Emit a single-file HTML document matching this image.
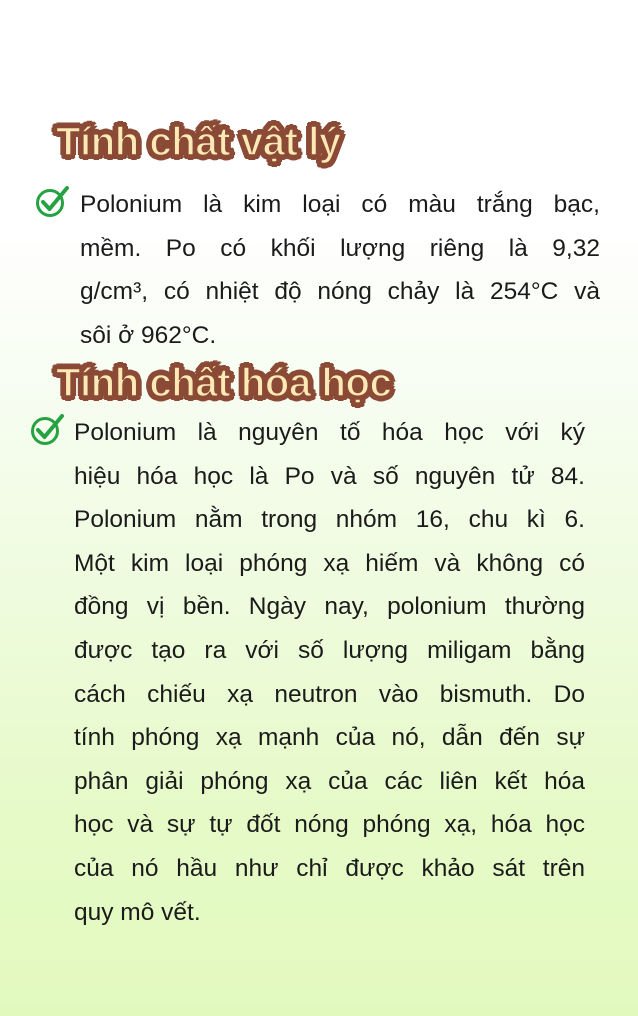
<!DOCTYPE html>
<html><head><meta charset="utf-8"><style>
html,body{margin:0;padding:0}
body{width:638px;height:1016px;overflow:hidden;position:relative;
background:linear-gradient(180deg,#ffffff 0%,#ffffff 22%,#f6fdf0 40%,#eefbdc 60%,#e6fac8 80%,#e2f9be 100%);
font-family:"Liberation Sans",sans-serif;color:#1b1b1b}
.title{position:absolute;font-weight:bold;font-size:40px;letter-spacing:-0.4px;color:#fde9b6;white-space:nowrap;
-webkit-text-stroke:1.5px #8a4a36;
text-shadow:
 3px 0 #8a4a36,-3px 0 #8a4a36,0 3px #8a4a36,0 -3px #8a4a36,
 2px 2px #8a4a36,-2px 2px #8a4a36,2px -2px #8a4a36,-2px -2px #8a4a36,
 5px 0 #8a4a36,-5px 0 #8a4a36,0 5px #8a4a36,0 -5px #8a4a36,
 4px 3px #8a4a36,-4px 3px #8a4a36,4px -3px #8a4a36,-4px -3px #8a4a36,
 3px 4px #8a4a36,-3px 4px #8a4a36,3px -4px #8a4a36,-3px -4px #8a4a36}
.block{position:absolute;font-size:24.5px}
.l{height:43.6px;line-height:43.6px;text-align:justify;text-align-last:justify;white-space:nowrap}
.l.last{text-align-last:left}
.chk{position:absolute;width:36px;height:36px}
</style></head><body>
<div class="title" style="left:56px;top:120px">Tính chất vật lý</div>
<svg class="chk" style="left:35px;top:184px" viewBox="0 0 36 36"><circle cx="15" cy="19" r="12.5" fill="none" stroke="#27a243" stroke-width="3"/><path d="M8 18 L14.5 25 L32 4" fill="none" stroke="#27a243" stroke-width="4" stroke-linecap="round" stroke-linejoin="round"/></svg>
<div class="block" style="left:80px;top:183px;width:520px">
<div class="l">Polonium là kim loại có màu trắng bạc,</div>
<div class="l">mềm. Po có khối lượng riêng là 9,32</div>
<div class="l">g/cm³, có nhiệt độ nóng chảy là 254°C và</div>
<div class="l last">sôi ở 962°C.</div>
</div>
<div class="title" style="left:56px;top:361px">Tính chất hóa học</div>
<svg class="chk" style="left:30px;top:412px" viewBox="0 0 36 36"><circle cx="15" cy="19" r="12.5" fill="none" stroke="#27a243" stroke-width="3"/><path d="M8 18 L14.5 25 L32 4" fill="none" stroke="#27a243" stroke-width="4" stroke-linecap="round" stroke-linejoin="round"/></svg>
<div class="block" style="left:74px;top:411px;width:511px">
<div class="l">Polonium là nguyên tố hóa học với ký</div>
<div class="l">hiệu hóa học là Po và số nguyên tử 84.</div>
<div class="l">Polonium nằm trong nhóm 16, chu kì 6.</div>
<div class="l">Một kim loại phóng xạ hiếm và không có</div>
<div class="l">đồng vị bền. Ngày nay, polonium thường</div>
<div class="l">được tạo ra với số lượng miligam bằng</div>
<div class="l">cách chiếu xạ neutron vào bismuth. Do</div>
<div class="l">tính phóng xạ mạnh của nó, dẫn đến sự</div>
<div class="l">phân giải phóng xạ của các liên kết hóa</div>
<div class="l">học và sự tự đốt nóng phóng xạ, hóa học</div>
<div class="l">của nó hầu như chỉ được khảo sát trên</div>
<div class="l last">quy mô vết.</div>
</div>
</body></html>
